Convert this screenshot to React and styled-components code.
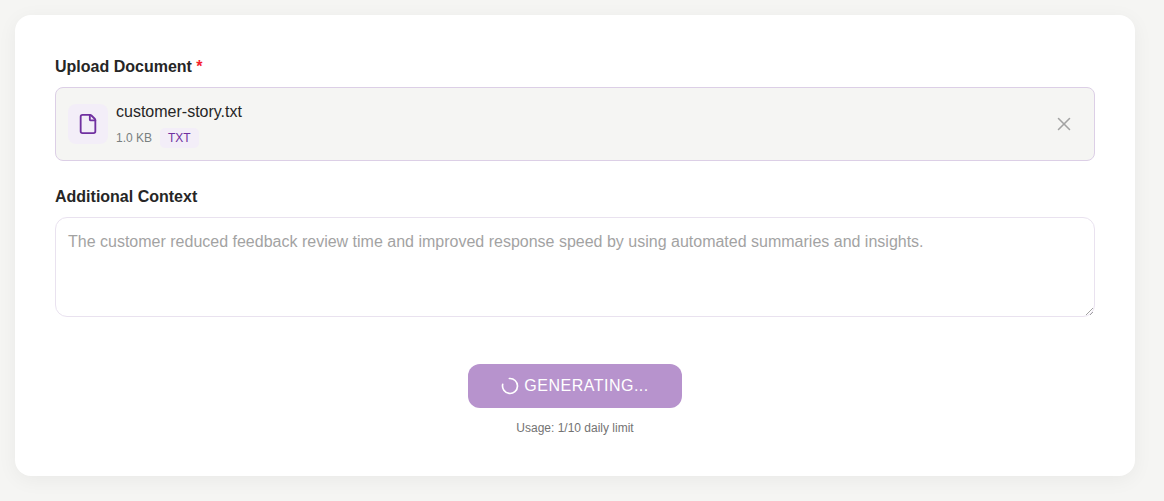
import React from "react";
import styled, { createGlobalStyle } from "styled-components";
import { File, X, LoaderCircle } from "lucide-react";

const Global = createGlobalStyle`
  html, body { margin: 0; padding: 0; background: #f5f5f3; }
  body { font-family: "Liberation Sans", Arial, sans-serif; color: #262626; }
  * { box-sizing: border-box; }
`;
const Page = styled.div`
  padding: 15px 29px 25px 15px;
  width: 1164px;
  height: 501px;
  overflow: hidden;
`;
const Card = styled.form`
  width: 1120px;
  height: 461px;
  background: #fff;
  border-radius: 16px;
  box-shadow: 0 4px 20px rgba(0, 0, 0, 0.05);
  padding: 40px;
  display: flex;
  flex-direction: column;
`;
const Field = styled.div`
  display: flex;
  flex-direction: column;
  margin-bottom: 24px;
`;
const Label = styled.label`
  font-size: 16px;
  line-height: 24px;
  font-weight: 700;
  margin-bottom: 8px;
  color: #262626;
`;
const Star = styled.span`
  color: #f5222d;
`;
const FileBox = styled.div`
  height: 74px;
  background: #f5f5f3;
  border: 1px solid #dccfe6;
  border-radius: 8px;
  padding: 0 12px;
  display: flex;
  align-items: center;
  gap: 8px;
`;
const IconTile = styled.div`
  width: 40px;
  height: 40px;
  border-radius: 8px;
  background: #f3eef8;
  color: #7030a0;
  display: flex;
  align-items: center;
  justify-content: center;
  flex: none;
`;
const FileInfo = styled.div`
  display: flex;
  flex-direction: column;
  flex: 1;
  gap: 4px;
  padding-bottom: 1px;
`;
const FileName = styled.div`
  font-size: 16px;
  line-height: 24px;
  color: #262626;
`;
const Meta = styled.div`
  display: flex;
  align-items: center;
  gap: 8px;
`;
const Size = styled.span`
  font-size: 12px;
  color: #78807f;
`;
const Tag = styled.span`
  font-size: 12px;
  line-height: 20px;
  padding: 0 8px;
  border-radius: 5px;
  background: #f3eef8;
  color: #7030a0;
`;
const Remove = styled.button`
  border: 0;
  background: none;
  padding: 0;
  margin-right: 7px;
  width: 22px;
  height: 22px;
  color: #a3a3a3;
  display: flex;
  align-items: center;
  justify-content: center;
`;
const Area = styled.textarea`
  height: 100px;
  width: 100%;
  border: 1px solid #dccfe6;
  border-radius: 12px;
  padding: 12px;
  font: 16px/24px "Liberation Sans", Arial, sans-serif;
  background: #fff;
  outline: none;
  display: block;
  opacity: 0.6;
  &::placeholder { color: #666; opacity: 1; }
`;
const Actions = styled.div`
  display: flex;
  flex-direction: column;
  align-items: center;
  margin-top: 23px;
`;
const Generate = styled.button`
  width: 214px;
  height: 44px;
  border: 0;
  border-radius: 12px;
  padding: 0 1px 0 0;
  background: #b793cd;
  color: #fff;
  font: 16px "Liberation Sans", Arial, sans-serif;
  letter-spacing: 0.5px;
  display: flex;
  align-items: center;
  justify-content: center;
  gap: 4px;
`;
const Spinner = styled(LoaderCircle)`
  transform: rotate(-95deg);
`;
const Usage = styled.div`
  margin-top: 12px;
  font-size: 12px;
  line-height: 16px;
  color: #737373;
`;

export default function App() {
  return (
    <Page>
      <Global />
      <Card>
        <Field>
          <Label>Upload Document <Star>*</Star></Label>
          <FileBox>
            <IconTile><File size={22} /></IconTile>
            <FileInfo>
              <FileName>customer-story.txt</FileName>
              <Meta>
                <Size>1.0 KB</Size>
                <Tag>TXT</Tag>
              </Meta>
            </FileInfo>
            <Remove type="button"><X size={22} strokeWidth={1.7} /></Remove>
          </FileBox>
        </Field>
        <Field>
          <Label>Additional Context</Label>
          <Area disabled placeholder="The customer reduced feedback review time and improved response speed by using automated summaries and insights." />
        </Field>
        <Actions>
          <Generate type="button" disabled><Spinner size={20} />GENERATING...</Generate>
          <Usage>Usage: 1/10 daily limit</Usage>
        </Actions>
      </Card>
    </Page>
  );
}
